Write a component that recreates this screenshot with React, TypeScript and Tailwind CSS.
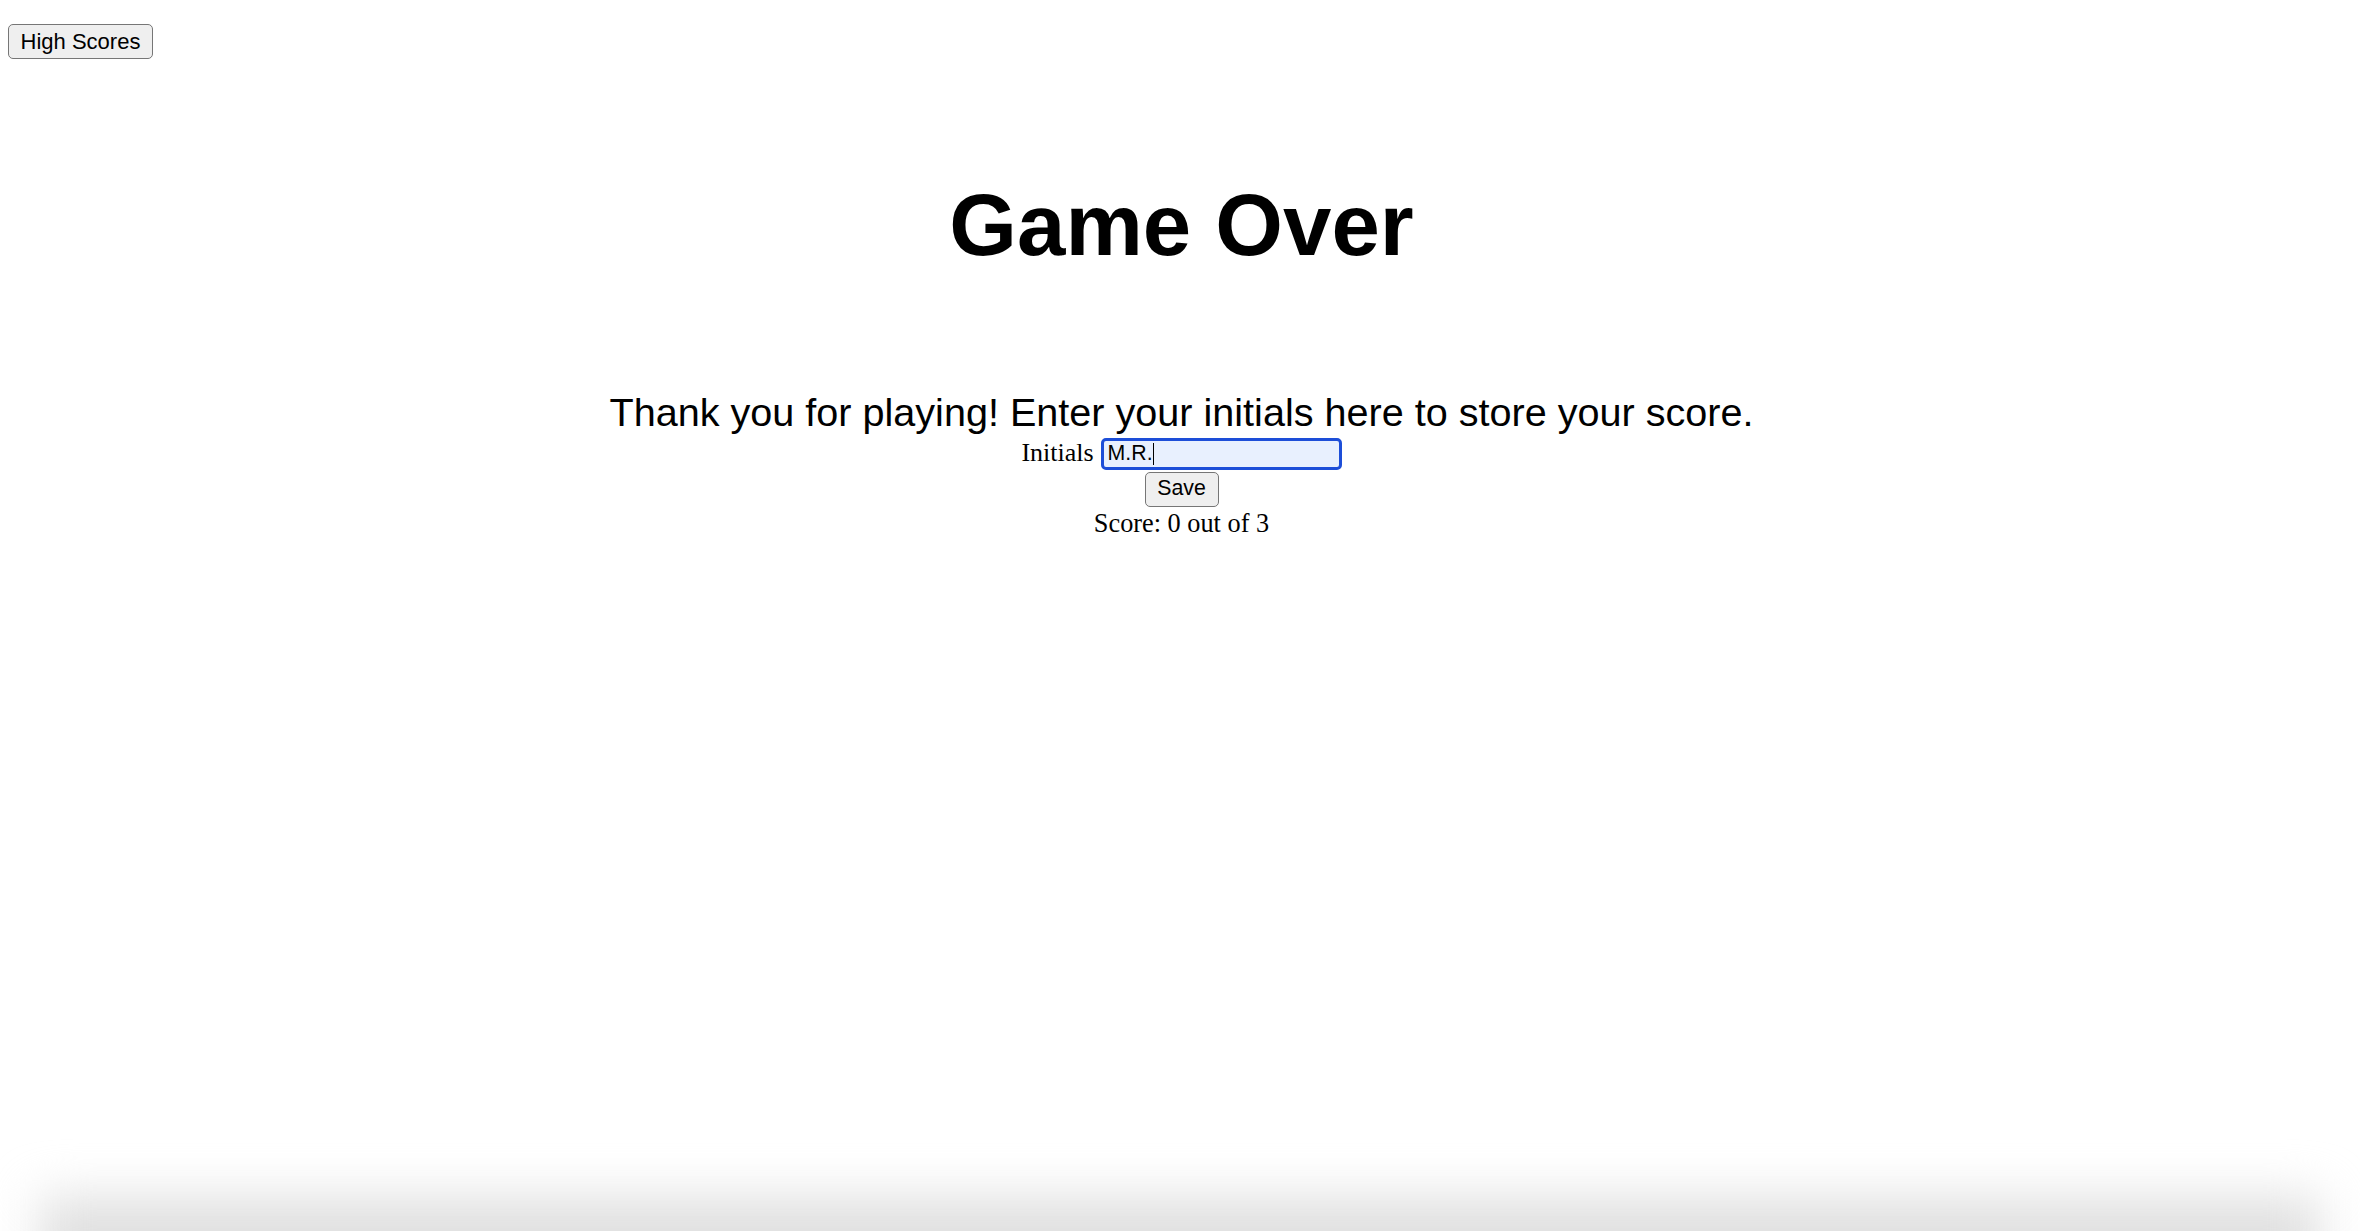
import React from "react";

const sans = "font-['Liberation_Sans',Arial,sans-serif]";
const serif = "font-['Liberation_Serif','Times_New_Roman',serif]";

const App = () => {
  return (
    <div className="relative min-h-screen overflow-hidden bg-white flex flex-col text-black">
      <div className="pl-[8px] pt-[24px]">
        <button
          className={`${sans} w-[145px] h-[35px] text-[22px] leading-none bg-[#efefef] border border-[#767676] rounded-[5px]`}
        >
          High Scores
        </button>
      </div>

      <div className="pl-[3px] flex flex-col">
        <h1 className={`${sans} mt-[122px] text-center text-[87px] font-bold leading-none`}>
          Game Over
        </h1>

        <p className={`${sans} mt-[125px] text-center text-[39.6px] leading-none`}>
          Thank you for playing! Enter your initials here to store your score.
        </p>

        <div className="mt-[5px] flex items-start justify-center gap-[7px]">
          <label className={`${serif} mt-[2px] text-[26px] leading-none`}>Initials</label>
          <div
            className={`${sans} w-[241px] h-[32px] flex items-center pl-[4px] bg-[#e8f0fe] border-[3px] border-[#1d4ed8] rounded-[5px] text-[21.3px]`}
          >
            <span>M.R.</span>
            <span className="w-[1px] h-[22px] bg-black" />
          </div>
        </div>

        <div className="mt-[2px] flex justify-center">
          <button
            className={`${sans} w-[74px] h-[35px] text-[21.3px] leading-none bg-[#efefef] border border-[#767676] rounded-[5px]`}
          >
            Save
          </button>
        </div>

        <p className={`${serif} mt-[4px] text-center text-[26.3px] leading-none`}>
          Score: 0 out of 3
        </p>
      </div>

      {/* window edge shadow at the bottom */}
      <div className="mt-auto mx-[40px] -mb-[75px] h-[110px] bg-[#e0e0e0] blur-[24px]" />
    </div>
  );
};

export default App;
